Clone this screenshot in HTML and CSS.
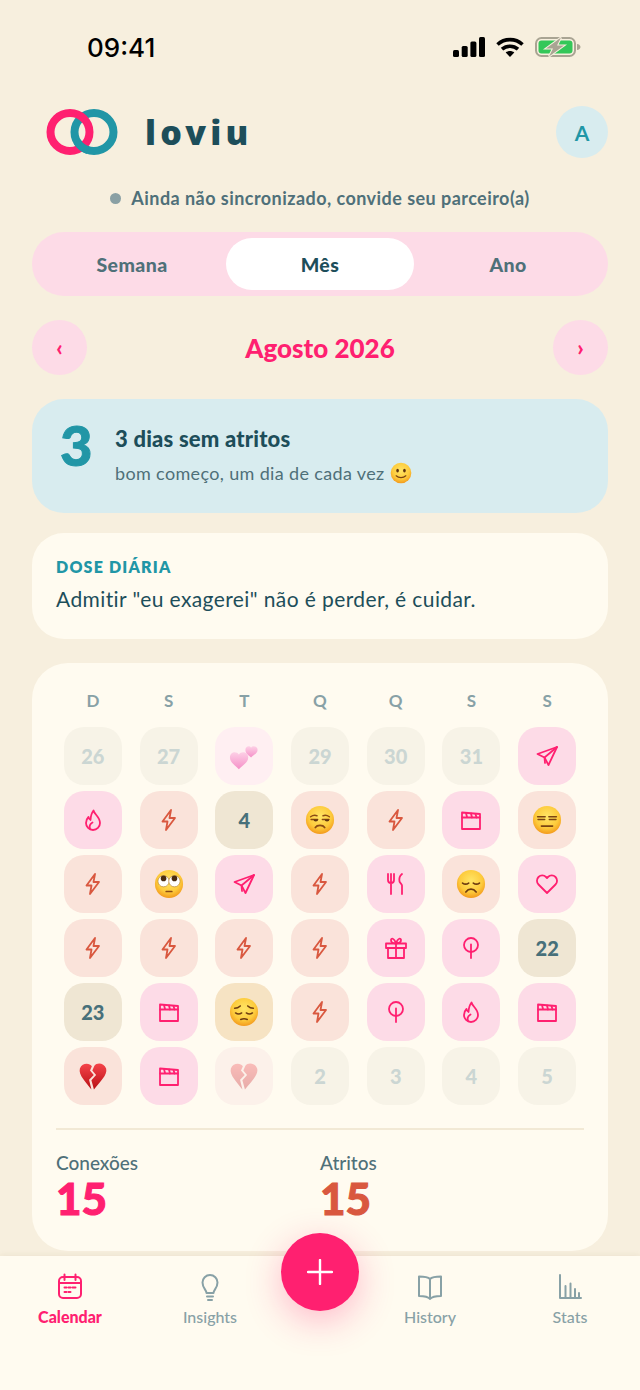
FILE: index.html
```html
<!DOCTYPE html>
<html lang="pt-BR">
<head>
    <meta charset="UTF-8">
    <meta name="viewport" content="width=device-width, initial-scale=1.0">
    <title>loviu</title>
    <link rel="stylesheet" href="styles.css">
</head>
<body>
    <!-- shared icons and emoji -->
    <svg class="sprites" width="0" height="0" aria-hidden="true">
        <defs>
            <radialGradient id="faceFill" cx="50%" cy="38%" r="62%">
                <stop offset="0" stop-color="#ffe566"/>
                <stop offset="0.65" stop-color="#fdcb3c"/>
                <stop offset="1" stop-color="#f39a1c"/>
            </radialGradient>
            <linearGradient id="heartRed" x1="0" y1="0" x2="0" y2="1">
                <stop offset="0" stop-color="#f5444a"/>
                <stop offset="1" stop-color="#b80f14"/>
            </linearGradient>
            <linearGradient id="heartPink" x1="0" y1="0" x2="0" y2="1">
                <stop offset="0" stop-color="#fdd0e6"/>
                <stop offset="1" stop-color="#f590c8"/>
            </linearGradient>
        </defs>
        <symbol id="i-zap" viewBox="0 0 24 24"><path d="M14 2 5.500 13.500h5L9 22l9-12h-5.500z"/></symbol>
        <symbol id="i-flame" viewBox="0 0 24 24"><path d="M12.500 2.500c.5 3.500 6.500 6.500 6.500 12.500a7 7 0 0 1-14 0c0-2.500 1-4.500 2.500-6 .2 1.500.8 2.500 2 3 .2-3.500 1-7 3-9.500z"/><path d="M9 20.500c-1-2.500 0-4.500 2.500-6"/></symbol>
        <symbol id="i-send" viewBox="0 0 24 24"><path d="M22 3 2.500 10l7 3.500L13.500 21z"/><path d="M22 3 9.500 13.500 10 19"/></symbol>
        <symbol id="i-film" viewBox="0 0 24 24"><path d="M3 4.500 21 6v15H3z"/><path d="M3 9.500h18"/><path d="M7 5l1 4M12 5.500l1 4M16.500 6l1 3.500"/></symbol>
        <symbol id="i-fork" viewBox="0 0 24 24"><path d="M4 2v6a3 3 0 0 0 3 3h0a3 3 0 0 0 3-3V2M7 2v20"/><path d="M18 2c-2.500 2-3 5-2.500 7.500.3 1.500 2.500 2.500 2.500 4V22"/></symbol>
        <symbol id="i-heart" viewBox="0 0 24 24"><path d="M12 21 3.500 12.500a5.300 5.300 0 0 1 0-7.500 5.300 5.300 0 0 1 7.500 0l1 1 1-1a5.300 5.300 0 0 1 7.500 7.500z"/></symbol>
        <symbol id="i-gift" viewBox="0 0 24 24"><path d="M2 7.500h20v4.500H2z"/><path d="M4 12v10h16V12M12 7.500V22"/><path d="M12 7.500C9 7.500 7 6 7 4s3-2.500 5 3.500c2-6 5-5.500 5-3.500s-2 3.500-5 3.500z"/></symbol>
        <symbol id="i-tree" viewBox="0 0 24 24"><circle cx="12" cy="9" r="7"/><path d="M12 8.500V22"/></symbol>
        <symbol id="e-unamused" viewBox="0 0 32 32">
            <circle cx="16" cy="16" r="15" fill="url(#faceFill)"/>
            <path d="M6 12.500c2-1.500 5-2 7-1M19 11.500c2-1 5-.5 7 1M6.500 15.500h7M18.500 15.500h7" fill="none" stroke="#8a4a14" stroke-width="1.500" stroke-linecap="round"/>
            <path d="M9 15.500a2.500 2 0 0 0 5 0M21 15.500a2.500 2 0 0 0 5 0" fill="#5e3410"/>
            <path d="M11 24c2-3 8-3 10 0" fill="none" stroke="#8a4a14" stroke-width="1.800" stroke-linecap="round"/>
        </symbol>
        <symbol id="e-roll" viewBox="0 0 32 32">
            <circle cx="16" cy="16" r="15" fill="url(#faceFill)"/>
            <circle cx="10.200" cy="13" r="6" fill="#fff" stroke="#a8701c" stroke-width=".6"/>
            <circle cx="21.800" cy="13" r="6" fill="#fff" stroke="#a8701c" stroke-width=".6"/>
            <circle cx="10.200" cy="10" r="3" fill="#4a2c10"/>
            <circle cx="21.800" cy="10" r="3" fill="#4a2c10"/>
            <path d="M13 24h6" stroke="#8a4a14" stroke-width="1.800" stroke-linecap="round"/>
        </symbol>
        <symbol id="e-flat" viewBox="0 0 32 32">
            <circle cx="16" cy="16" r="15" fill="url(#faceFill)"/>
            <path d="M6 12.500h8M18 12.500h8M6.500 15.500h7M18.500 15.500h7M10 22.500h12" fill="none" stroke="#7a4412" stroke-width="1.700" stroke-linecap="round"/>
        </symbol>
        <symbol id="e-sad" viewBox="0 0 32 32">
            <circle cx="16" cy="16" r="15" fill="url(#faceFill)"/>
            <path d="M7 15c2 1.500 4.500 1.500 6.500 0M18.500 15c2 1.500 4.500 1.500 6.500 0M10.500 24.500c3-4 8-4 11 0" fill="none" stroke="#6e3c10" stroke-width="1.800" stroke-linecap="round"/>
        </symbol>
        <symbol id="e-pensive" viewBox="0 0 32 32">
            <circle cx="16" cy="16" r="15" fill="url(#faceFill)"/>
            <path d="M6 12c2.500 0 4.500-1 6-2.500M26 12c-2.500 0-4.500-1-6-2.500M7 17c2 1.500 4.500 1.500 6.500 0M18.500 17c2 1.500 4.500 1.500 6.500 0M12.500 24c2-1 5-1 7 0" fill="none" stroke="#6e3c10" stroke-width="1.600" stroke-linecap="round"/>
        </symbol>
        <symbol id="e-smile" viewBox="0 0 32 32">
            <circle cx="16" cy="16" r="15" fill="url(#faceFill)"/>
            <ellipse cx="11" cy="12.500" rx="1.900" ry="2.700" fill="#5e3410"/>
            <ellipse cx="21" cy="12.500" rx="1.900" ry="2.700" fill="#5e3410"/>
            <path d="M9 20c3.500 3.500 10.500 3.500 14 0" fill="none" stroke="#7a4412" stroke-width="1.700" stroke-linecap="round"/>
        </symbol>
        <symbol id="e-broken" viewBox="0 0 32 32">
            <path d="M14.800 5.500C12.500 2 4.500 1.500 2 8c-2 7 7 15 12.300 22.500L11.800 20l5-5-4-5z" fill="url(#heartRed)"/>
            <path d="M17.500 5C20 1.500 27.500 1.500 30 8c2 7-7.500 15-13 22.500l-2.700-10 5-5.500-4-5z" fill="url(#heartRed)"/>
        </symbol>
        <symbol id="e-hearts" viewBox="0 0 32 32">
            <path d="M10.500 30C6 26 1 22.500 1 17.500c0-6 7-7.500 9.500-3 2.500-4.500 10-3 10 3 0 5-5.500 8.500-10 12.500z" fill="url(#heartPink)"/>
            <path d="M23.500 17.500c-2.800-2.600-6-4.500-6-8 0-4 4.500-5 6-2.200 1.500-2.800 7-1.800 7 2.200 0 3.500-4 5.400-7 8z" fill="url(#heartPink)"/>
        </symbol>
    </svg>

    <main class="screen">
        <div class="status-bar">
            <span class="clock">09:41</span>
            <div class="status-icons">
                <svg width="32" height="20" viewBox="0 0 32 20"><rect x="0" y="13" width="6" height="7" rx="1.500"/><rect x="8.700" y="9" width="6" height="11" rx="1.500"/><rect x="17.400" y="4.500" width="6" height="15.500" rx="1.500"/><rect x="26" y="0" width="6" height="20" rx="1.500"/></svg>
                <svg width="28" height="20" viewBox="0 0 28 20" fill="none" stroke="#000" stroke-width="3.600"><path d="M1.500 7.500c7-6.500 18-6.500 25 0"/><path d="M6 12.200c4.500-4 11.500-4 16 0"/><path d="M14 20l-4.300-4.500c2.400-2 6.200-2 8.600 0z" fill="#000" stroke="none"/></svg>
                <svg width="46" height="20" viewBox="0 0 46 20"><rect x="1" y="1" width="39" height="18" rx="5.500" fill="none" stroke="#a9a493" stroke-width="2"/><rect x="3.500" y="3.500" width="34" height="13" rx="3" fill="#34c759"/><path d="M42 7c2 0 3.500 1.500 3.500 3s-1.500 3-3.500 3z" fill="#a9a493"/><path d="M26 .5 11 11.500h7L14 19.500l15-11h-7z" fill="#a9a493" stroke="#f7efde" stroke-width="2" paint-order="stroke"/></svg>
            </div>
        </div>

        <header class="top">
            <svg class="logo-rings" width="72" height="48" viewBox="0 0 72 48" fill="none" stroke-width="8">
                <ellipse cx="48" cy="24" rx="19.500" ry="19" stroke="#2196a6"/>
                <ellipse cx="24" cy="24" rx="19.500" ry="19" stroke="#ff2070"/>
                <path d="M31 33.500A19.500 19 0 0 0 42 42.100" stroke="#2196a6"/>
            </svg>
            <span class="brand">loviu</span>
            <div class="avatar">A</div>
        </header>

        <p class="sync"><span class="sync-dot"></span>Ainda não sincronizado, convide seu parceiro(a)</p>

        <div class="tabs">
            <button class="tab">Semana</button>
            <button class="tab tab-active">Mês</button>
            <button class="tab">Ano</button>
        </div>

        <div class="month-nav">
            <button class="month-btn">‹</button>
            <h2>Agosto 2026</h2>
            <button class="month-btn">›</button>
        </div>

        <section class="streak">
            <div class="streak-num">3</div>
            <div>
                <h3>3 dias sem atritos</h3>
                <p>bom começo, um dia de cada vez <svg class="emoji-inline" width="22" height="22"><use href="#e-smile"/></svg></p>
            </div>
        </section>

        <section class="dose">
            <h4>DOSE DIÁRIA</h4>
            <p>Admitir "eu exagerei" não é perder, é cuidar.</p>
        </section>

        <section class="calendar">
            <div class="week">
                <span>D</span><span>S</span><span>T</span><span>Q</span><span>Q</span><span>S</span><span>S</span>
            </div>
            <div class="days">
                <div class="cell out">26</div>
                <div class="cell out">27</div>
                <div class="cell hearts"><svg class="emoji"><use href="#e-hearts"/></svg></div>
                <div class="cell out">29</div>
                <div class="cell out">30</div>
                <div class="cell out">31</div>
                <div class="cell conn"><svg class="ico"><use href="#i-send"/></svg></div>

                <div class="cell conn"><svg class="ico"><use href="#i-flame"/></svg></div>
                <div class="cell fric"><svg class="ico"><use href="#i-zap"/></svg></div>
                <div class="cell empty">4</div>
                <div class="cell fric"><svg class="emoji"><use href="#e-unamused"/></svg></div>
                <div class="cell fric"><svg class="ico"><use href="#i-zap"/></svg></div>
                <div class="cell conn"><svg class="ico"><use href="#i-film"/></svg></div>
                <div class="cell fric"><svg class="emoji"><use href="#e-flat"/></svg></div>

                <div class="cell fric"><svg class="ico"><use href="#i-zap"/></svg></div>
                <div class="cell fric"><svg class="emoji"><use href="#e-roll"/></svg></div>
                <div class="cell conn"><svg class="ico"><use href="#i-send"/></svg></div>
                <div class="cell fric"><svg class="ico"><use href="#i-zap"/></svg></div>
                <div class="cell conn"><svg class="ico"><use href="#i-fork"/></svg></div>
                <div class="cell fric"><svg class="emoji"><use href="#e-sad"/></svg></div>
                <div class="cell conn"><svg class="ico"><use href="#i-heart"/></svg></div>

                <div class="cell fric"><svg class="ico"><use href="#i-zap"/></svg></div>
                <div class="cell fric"><svg class="ico"><use href="#i-zap"/></svg></div>
                <div class="cell fric"><svg class="ico"><use href="#i-zap"/></svg></div>
                <div class="cell fric"><svg class="ico"><use href="#i-zap"/></svg></div>
                <div class="cell conn"><svg class="ico"><use href="#i-gift"/></svg></div>
                <div class="cell conn"><svg class="ico"><use href="#i-tree"/></svg></div>
                <div class="cell empty">22</div>

                <div class="cell empty">23</div>
                <div class="cell conn"><svg class="ico"><use href="#i-film"/></svg></div>
                <div class="cell sad"><svg class="emoji"><use href="#e-pensive"/></svg></div>
                <div class="cell fric"><svg class="ico"><use href="#i-zap"/></svg></div>
                <div class="cell conn"><svg class="ico"><use href="#i-tree"/></svg></div>
                <div class="cell conn"><svg class="ico"><use href="#i-flame"/></svg></div>
                <div class="cell conn"><svg class="ico"><use href="#i-film"/></svg></div>

                <div class="cell fric"><svg class="emoji"><use href="#e-broken"/></svg></div>
                <div class="cell conn"><svg class="ico"><use href="#i-film"/></svg></div>
                <div class="cell broken"><svg class="emoji"><use href="#e-broken"/></svg></div>
                <div class="cell out">2</div>
                <div class="cell out">3</div>
                <div class="cell out">4</div>
                <div class="cell out">5</div>
            </div>
            <div class="totals">
                <div>
                    <span class="total-label">Conexões</span>
                    <strong class="total-num pink">15</strong>
                </div>
                <div>
                    <span class="total-label">Atritos</span>
                    <strong class="total-num red">15</strong>
                </div>
            </div>
        </section>
    </main>

    <nav class="tabbar">
        <a class="tabbar-item active">
            <svg width="30" height="30" viewBox="0 0 30 30"><rect x="4" y="5" width="22" height="21" rx="4"/><path d="M4 11h22M9.500 2.500V8M20.500 2.500V8"/><path class="dots" d="M9.500 15.500h2M13.500 15.500h2M17.500 15.500h3M9.500 20h2M13.500 20h2"/></svg>
            Calendar
        </a>
        <a class="tabbar-item">
            <svg width="30" height="30" viewBox="0 0 30 30"><path d="M11.500 21c0-3-4-5-4-10.500a7.500 7.500 0 0 1 15 0c0 5.500-4 7.500-4 10.500z"/><path d="M12 24.500h6M13 28h4"/></svg>
            Insights
        </a>
        <div class="tabbar-gap"></div>
        <a class="tabbar-item">
            <svg width="30" height="30" viewBox="0 0 30 30"><path d="M15 7c-2-2-6-2.500-11-2.500V24c5 0 9 .5 11 3 2-2.500 6-3 11-3V4.500C21 4.500 17 5 15 7zM15 7v20"/></svg>
            History
        </a>
        <a class="tabbar-item">
            <svg width="30" height="30" viewBox="0 0 30 30"><path d="M5 3v23h21M10.500 26V14M15.500 26V11.500M20 26v-9M24 26v-5"/></svg>
            Stats
        </a>
    </nav>
    <button class="fab"><svg width="26" height="26" viewBox="0 0 26 26"><path d="M13 1v24M1 13h24"/></svg></button>
</body>
</html>
```

FILE: styles.css
```css
* {
    box-sizing: border-box;
}

body {
    margin: 0;
    width: 640px;
    height: 1390px;
    overflow: hidden;
    position: relative;
    display: flex;
    flex-direction: column;
    background-color: #f7efde;
    color: #1d4e5a;
    font-family: "Lato", "Noto Sans", sans-serif;
}

.sprites {
    position: absolute;
}

h2, h3, h4, p {
    margin: 0;
}

button {
    font-family: inherit;
    border: none;
    cursor: pointer;
}

.screen {
    height: 1256px;
    padding: 0 32px;
    overflow: hidden;
}

/* status bar */
.status-bar {
    height: 106px;
    padding: 31px 27px 0 55px;
    display: flex;
    justify-content: space-between;
    align-items: flex-start;
}

.clock {
    font-family: "Inter", sans-serif;
    font-size: 26px;
    font-weight: 500;
    line-height: 34px;
    color: #000;
}

.status-icons {
    display: flex;
    gap: 11px;
    padding-top: 6px;
}

/* header */
.top {
    height: 52px;
    padding-left: 14px;
    display: flex;
    align-items: center;
}

.logo-rings {
    flex: none;
}

.brand {
    margin-left: 27px;
    font-family: "Noto Sans", sans-serif;
    font-size: 34px;
    font-weight: 900;
    letter-spacing: 4.2px;
    line-height: 1;
    color: #1d4e5a;
}

.avatar {
    margin-left: auto;
    width: 52px;
    height: 52px;
    border-radius: 50%;
    background-color: #d8ecef;
    color: #2196a6;
    font-size: 21px;
    font-weight: 700;
    display: flex;
    align-items: center;
    justify-content: center;
}

.sync {
    margin-top: 28px;
    height: 24px;
    display: flex;
    align-items: center;
    justify-content: center;
    font-size: 18px;
    font-weight: 700;
    letter-spacing: 0.45px;
    color: #4f7079;
}

.sync-dot {
    width: 11px;
    height: 11px;
    margin-right: 10px;
    border-radius: 50%;
    background-color: #8aa0a4;
}

/* view switch */
.tabs {
    margin-top: 22px;
    height: 64px;
    padding: 6px;
    border-radius: 32px;
    background-color: #fddbe7;
    display: grid;
    grid-template-columns: repeat(3, 1fr);
}

.tab {
    background: none;
    border-radius: 26px;
    font-size: 19.5px;
    font-weight: 900;
    letter-spacing: 0.4px;
    color: #4f7079;
}

.tab-active {
    background-color: #fff;
    color: #1d4e5a;
}

.month-nav {
    margin-top: 24px;
    height: 55px;
    display: flex;
    align-items: center;
    justify-content: space-between;
}

.month-nav h2 {
    font-size: 26px;
    font-weight: 900;
    color: #ff2070;
}

.month-btn {
    width: 55px;
    height: 55px;
    border-radius: 50%;
    background-color: #fddbe7;
    color: #ff2070;
    font-size: 22px;
    font-weight: 900;
    padding: 0;
}

/* streak */
.streak {
    margin-top: 24px;
    height: 114px;
    padding: 18px 28px;
    border-radius: 32px;
    background-color: #d8ecef;
    display: flex;
    gap: 23px;
}

.streak-num {
    width: 32px;
    margin-top: -1px;
    font-size: 56px;
    font-weight: 900;
    line-height: 58px;
    color: #2196a6;
    -webkit-text-stroke: 1px #2196a6;
}

.streak h3 {
    margin-top: 8px;
    font-size: 22px;
    font-weight: 900;
    letter-spacing: 0.2px;
    line-height: 28px;
}

.streak p {
    margin-top: 6px;
    font-size: 18px;
    letter-spacing: 0.35px;
    line-height: 28px;
    color: #4f7079;
    display: flex;
    align-items: center;
    gap: 5px;
}

.dose {
    margin-top: 20px;
    height: 106px;
    padding: 23px 24px;
    border-radius: 32px;
    background-color: #fffbf0;
}

.dose h4 {
    font-size: 16px;
    font-weight: 800;
    letter-spacing: 1.2px;
    line-height: 22px;
    color: #2196a6;
}

.dose p {
    margin-top: 7px;
    font-size: 21px;
    letter-spacing: 0.4px;
    line-height: 28px;
}

/* calendar */
.calendar {
    margin-top: 24px;
    height: 588px;
    padding: 26px 24px 0;
    border-radius: 36px;
    background-color: #fffbf0;
}

.week,
.days {
    display: grid;
    grid-template-columns: repeat(7, 1fr);
    justify-items: center;
    margin-left: -1px;
    margin-right: -1px;
}

.week {
    height: 24px;
    line-height: 24px;
    font-size: 17px;
    font-weight: 700;
    color: #88a1a6;
}

.days {
    margin-top: 14px;
    row-gap: 6px;
}

.cell {
    width: 58px;
    height: 58px;
    border-radius: 20px;
    display: flex;
    align-items: center;
    justify-content: center;
    font-size: 20px;
    font-weight: 900;
}

.out {
    background-color: #f7f3e7;
    color: #cbd6d3;
}

.empty {
    background-color: #efe6d3;
    color: #47707a;
}

.conn {
    background-color: #fddbe7;
}

.fric {
    background-color: #fae3da;
}

.sad {
    background-color: #f6e3c3;
}

.hearts {
    background-color: #ffeff2;
}

.broken {
    background-color: #fcf1ea;
}

.broken .emoji {
    opacity: 0.3;
}

.ico {
    width: 24px;
    height: 24px;
    fill: none;
    stroke-width: 1.8;
    stroke-linejoin: round;
    stroke-linecap: round;
}

.conn .ico {
    stroke: #ff2070;
}

.fric .ico {
    stroke: #d9583f;
}

.emoji {
    width: 30px;
    height: 30px;
}

.totals {
    margin-top: 23px;
    padding-top: 21px;
    border-top: 2px solid #f2e9d5;
    display: grid;
    grid-template-columns: 1fr 1fr;
}

.total-label {
    display: block;
    font-size: 19px;
    line-height: 24px;
    font-weight: 500;
    color: #4f7079;
}

.total-num {
    display: block;
    margin-top: 3px;
    font-size: 44px;
    font-weight: 900;
    line-height: 40px;
    -webkit-text-stroke: 1px currentColor;
}

.pink {
    color: #ff2070;
}

.red {
    color: #d9583f;
}

/* bottom bar */
.tabbar {
    flex: 1;
    display: flex;
    background-color: #fffbf0;
    box-shadow: 0 -1px 6px rgba(120, 90, 40, 0.08);
    padding-top: 16px;
}

.tabbar-item {
    width: 140px;
    height: 60px;
    display: flex;
    flex-direction: column;
    align-items: center;
    gap: 5px;
    font-size: 16px;
    font-weight: 500;
    color: #88a1a6;
}

.tabbar-item svg {
    fill: none;
    stroke: #88a1a6;
    stroke-width: 2;
    stroke-linecap: round;
    stroke-linejoin: round;
}

.tabbar-item.active {
    color: #ff2070;
    font-weight: 900;
}

.tabbar-item.active svg {
    stroke: #ff2070;
}

.tabbar-gap {
    width: 80px;
}

.fab {
    position: absolute;
    left: 281px;
    top: 1233px;
    width: 78px;
    height: 78px;
    border-radius: 50%;
    background-color: #ff2070;
    box-shadow: 0 10px 36px rgba(255, 32, 112, 0.3);
    display: flex;
    align-items: center;
    justify-content: center;
    padding: 0;
}

.fab svg {
    fill: none;
    stroke: #fff;
    stroke-width: 2.4;
    stroke-linecap: round;
}
```
